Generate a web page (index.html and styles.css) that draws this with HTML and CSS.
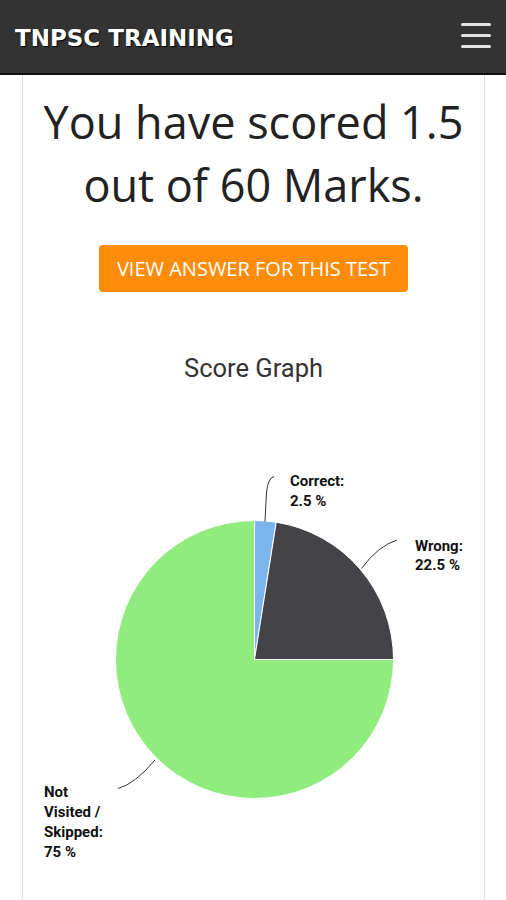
FILE: index.html
```html
<!DOCTYPE html>
<html lang="en">
<head>
    <meta charset="UTF-8">
    <meta name="viewport" content="width=device-width, initial-scale=1.0">
    <title>TNPSC Training - Result</title>
    <link rel="stylesheet" href="styles.css">
</head>
<body>
    <!-- Top Bar -->
    <header class="topbar">
        <a href="#" class="brand">TNPSC TRAINING</a>
        <button class="menu-toggle" aria-label="Open menu">
            <span></span>
            <span></span>
            <span></span>
        </button>
    </header>

    <!-- Result Section -->
    <main class="result">
        <h1 class="score">You have scored 1.5 out of 60 Marks.</h1>
        <a href="#" class="answer-btn">VIEW ANSWER FOR THIS TEST</a>

        <h2 class="graph-title">Score Graph</h2>

        <!-- Pie chart -->
        <svg class="score-chart" width="462" height="480" viewBox="0 0 462 480">
            <g stroke="#fff" stroke-width="1" stroke-linejoin="round">
                <path d="M231.5 259.5 L231.5 120.5 A139 139 0 0 1 253.24 122.21 Z" fill="#7cb5ec"/>
                <path d="M231.5 259.5 L253.24 122.21 A139 139 0 0 1 370.5 259.5 Z" fill="#434348"/>
                <path d="M231.5 259.5 L370.5 259.5 A139 139 0 1 1 231.5 120.5 Z" fill="#90ed7d"/>
            </g>
            <g fill="none" stroke="#333" stroke-width="1">
                <path d="M242 121.5 L243.5 92 Q245 78 251 76.5"/>
                <path d="M338.5 168.5 Q355 146 374 140"/>
                <path d="M132 360 Q112 384 95 388.5"/>
            </g>
            <g class="chart-label">
                <text x="267" y="85.5">Correct:<tspan x="267" dy="20">2.5 %</tspan></text>
                <text x="392" y="150.5">Wrong:<tspan x="392" dy="19">22.5 %</tspan></text>
                <text x="21" y="396.5">Not<tspan x="21" dy="20">Visited /</tspan><tspan x="21" dy="20">Skipped:</tspan><tspan x="21" dy="20">75 %</tspan></text>
            </g>
        </svg>
    </main>
</body>
</html>
```

FILE: styles.css
```css
body {
    background-color: #fff;
    font-family: "Open Sans", Arial, sans-serif;
    margin: 0;
    padding: 0;
}

/* Top Bar */
.topbar {
    background-color: #333;
    height: 73px;
    border-bottom: 2px solid #111;
    display: flex;
    justify-content: space-between;
    align-items: center;
    padding: 0 15px;
}

.brand {
    font-family: "DejaVu Sans", sans-serif;
    font-weight: bold;
    font-size: 23px;
    color: #fff;
    text-decoration: none;
    text-shadow: 1px 1px 1px #000;
    margin-top: 2px;
}

.menu-toggle {
    background: none;
    border: none;
    padding: 0;
    display: flex;
    flex-direction: column;
    gap: 8px;
    cursor: pointer;
    margin-top: -2px;
}

.menu-toggle span {
    display: block;
    width: 30px;
    height: 3px;
    border-radius: 2px;
    background-color: #e4e4e4;
}

/* Result Section */
.result {
    margin: 0 21px 0 22px;
    border-left: 1px solid #ddd;
    border-right: 1px solid #ddd;
    min-height: calc(100vh - 75px);
    display: flex;
    flex-direction: column;
    align-items: center;
    text-align: center;
}

.score {
    font-weight: normal;
    font-size: 45px;
    line-height: 63px;
    color: #222;
    margin: 15px 0 0;
    padding: 0 10px;
}

.answer-btn {
    margin-top: 29px;
    width: 309px;
    height: 47px;
    display: flex;
    align-items: center;
    justify-content: center;
    background-color: #fd8c0a;
    border-radius: 4px;
    color: #fff;
    font-size: 20px;
    text-decoration: none;
}

.graph-title {
    font-family: Roboto, sans-serif;
    font-weight: normal;
    font-size: 25.5px;
    line-height: 28px;
    color: #333;
    margin: 62px 0 0;
}

.score-chart {
    display: block;
    margin-top: 18px;
}

.chart-label {
    font-family: Roboto, sans-serif;
    font-weight: bold;
    font-size: 15px;
    fill: #111;
}
```
